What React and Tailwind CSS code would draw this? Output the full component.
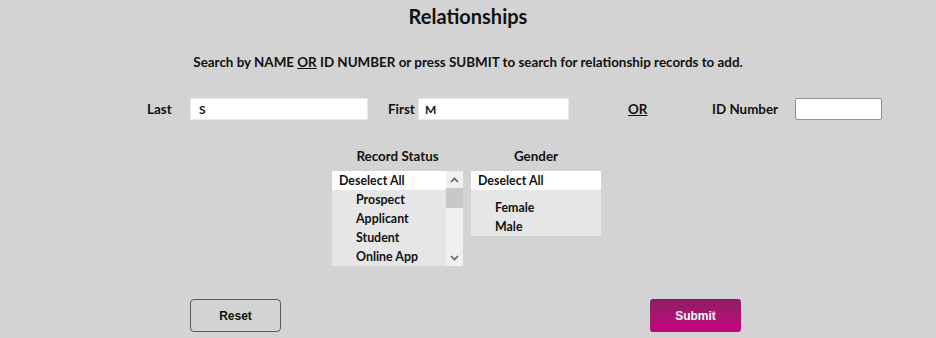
import React from "react";

const F = { fontFamily: "'Lato', 'Liberation Sans', sans-serif" };

function ChevUp() {
  return (
    <svg width="9" height="6" viewBox="0 0 9 6">
      <path d="M1 5 L4.5 1.5 L8 5" fill="none" stroke="#606060" strokeWidth="1.6" />
    </svg>
  );
}
function ChevDown() {
  return (
    <svg width="9" height="6" viewBox="0 0 9 6">
      <path d="M1 1 L4.5 4.5 L8 1" fill="none" stroke="#606060" strokeWidth="1.6" />
    </svg>
  );
}

export default function App() {
  return (
    <div
      className="w-[936px] h-[338px] bg-[#d3d3d3] text-[#111] flex flex-col overflow-hidden"
      style={F}
    >
      <h1 className="mt-[4px] h-[24px] leading-[24px] text-center text-[20px] font-bold">
        Relationships
      </h1>
      <p className="mt-[25px] h-[18px] leading-[18px] text-center text-[13.4px] font-bold">
        Search by NAME <span className="underline">OR</span> ID NUMBER or press SUBMIT to search for relationship records to add.
      </p>

      <div className="mt-[27px] flex items-center h-[22px] text-[13.4px] font-bold">
        <div className="ml-[147px] w-[43px]">Last</div>
        <input
          className="w-[178px] h-[22px] bg-white border border-[#e8e8e8] px-[8px] text-[12px] font-bold outline-none"
          defaultValue="S"
          style={F}
        />
        <div className="ml-[20px] w-[30px]">First</div>
        <input
          className="w-[151px] h-[22px] bg-white border border-[#e8e8e8] px-[6px] text-[12px] font-bold outline-none"
          defaultValue="M"
          style={F}
        />
        <div className="ml-[59px] w-[84px] underline">OR</div>
        <div className="w-[83px]">ID Number</div>
        <input
          className="w-[87px] h-[22px] bg-white border border-[#8e8e9a] rounded-[2px] outline-none"
          style={F}
        />
      </div>

      <div className="mt-[27px] flex ml-[332px] gap-[8px] text-[12.4px] font-bold">
        <div className="w-[131px] flex flex-col">
          <div className="h-[19px] leading-[19px] text-center text-[13.4px]">Record Status</div>
          <div className="mt-[5px] h-[95px] flex bg-[#e6e6e6]">
            <div className="flex-1 flex flex-col">
              <div className="h-[19px] leading-[20px] bg-white pl-[7px]">Deselect All</div>
              <div className="h-[19px] leading-[20px] pl-[24px]">Prospect</div>
              <div className="h-[19px] leading-[20px] pl-[24px]">Applicant</div>
              <div className="h-[19px] leading-[20px] pl-[24px]">Student</div>
              <div className="h-[19px] leading-[20px] pl-[24px]">Online App</div>
            </div>
            <div className="w-[17px] bg-[#f0f0f0] flex flex-col">
              <div className="h-[17px] flex items-center justify-center"><ChevUp /></div>
              <div className="h-[20px] bg-[#c8c8c8]" />
              <div className="flex-1" />
              <div className="h-[17px] flex items-center justify-center"><ChevDown /></div>
            </div>
          </div>
        </div>
        <div className="w-[130px] flex flex-col">
          <div className="h-[19px] leading-[19px] text-center text-[13.4px]">Gender</div>
          <div className="mt-[5px] h-[65px] flex flex-col bg-[#e6e6e6]">
            <div className="h-[19px] leading-[20px] bg-white pl-[7px]">Deselect All</div>
            <div className="h-[8px]" />
            <div className="h-[19px] leading-[20px] pl-[24px]">Female</div>
            <div className="h-[19px] leading-[20px] pl-[24px]">Male</div>
          </div>
        </div>
      </div>

      <div
        className="mt-[33px] flex text-[12px] font-bold"
        style={{ fontFamily: "'Liberation Sans', Arial, sans-serif" }}
      >
        <button className="ml-[190px] w-[91px] h-[33px] rounded-[4px] border border-[#5a5a5a] bg-[#d3d3d3] text-[#111]">
          Reset
        </button>
        <button className="ml-[369px] w-[91px] h-[33px] rounded-[3px] text-white bg-gradient-to-b from-[#8f1c62] to-[#c5007f]">
          Submit
        </button>
      </div>
    </div>
  );
}
